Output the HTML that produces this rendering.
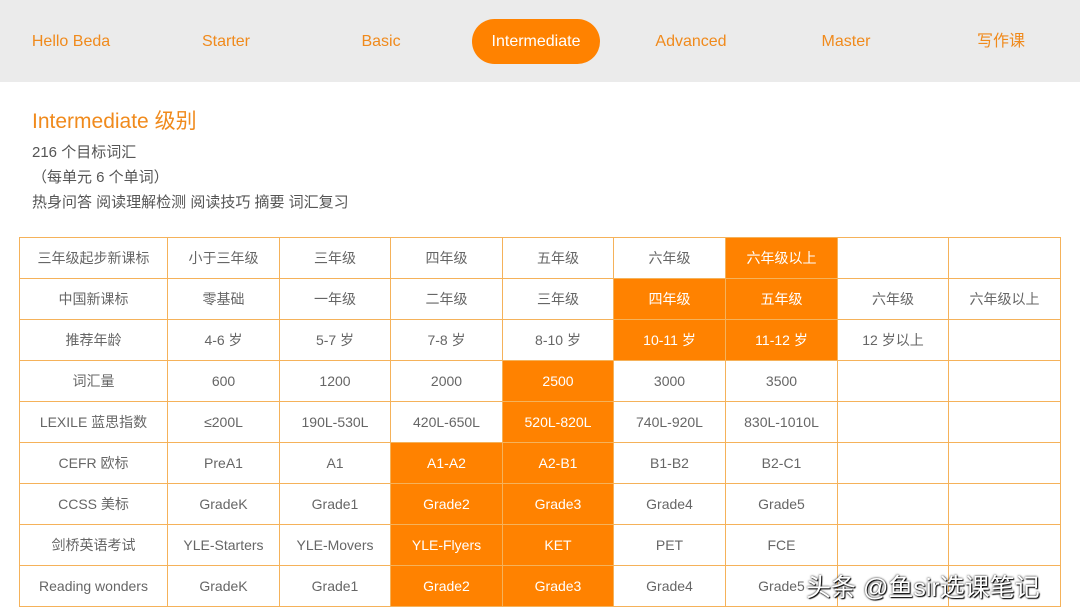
<!DOCTYPE html><html><head><meta charset="utf-8"><style>
body{margin:0;width:1080px;height:616px;background:#fff;font-family:"Liberation Sans","Noto Sans CJK SC",sans-serif;overflow:hidden;position:relative}
.nav{position:absolute;left:0;top:0;width:1080px;height:82px;background:#ebebeb}
.nav span{position:absolute;top:32px;height:20px;line-height:20px;font-size:16px;color:#f08a1c;transform:translateX(-50%);white-space:nowrap}
.pill{position:absolute;left:472px;top:19px;width:128px;height:45px;border-radius:23px;background:#ff8200}
.h{position:absolute;left:32px;top:109px;font-size:21px;color:#f08a1c;line-height:26px}
.t{position:absolute;left:32px;font-size:15px;color:#555;line-height:20px}
table{position:absolute;left:19px;top:237px;border-collapse:collapse;table-layout:fixed}
td{border:1px solid #f5b25a;height:40px;text-align:center;font-size:14px;color:#666;padding:0;white-space:nowrap}
td.o{background:#ff8200;color:#fff}
.wm{position:absolute;left:806px;top:568px;font-size:25px;color:#fff;text-shadow:0 0 2px #000,1px 1px 1px #000}
</style></head><body>
<div class="nav"><div class="pill"></div>
<span style="left:71px">Hello Beda</span><span style="left:226px">Starter</span><span style="left:381px">Basic</span><span style="left:536px;color:#fff">Intermediate</span><span style="left:691px">Advanced</span><span style="left:846px">Master</span><span style="left:1001px">写作课</span></div>
<div class="h">Intermediate 级别</div>
<div class="t" style="top:143px">216 个目标词汇</div>
<div class="t" style="top:168px">（每单元 6 个单词）</div>
<div class="t" style="top:193px">热身问答 阅读理解检测 阅读技巧 摘要 词汇复习</div>
<table>
<colgroup><col style="width:148px"><col style="width:112px"><col style="width:111px"><col style="width:112px"><col style="width:111px"><col style="width:112px"><col style="width:112px"><col style="width:111px"><col style="width:112px"></colgroup>
<tr><td>三年级起步新课标</td><td>小于三年级</td><td>三年级</td><td>四年级</td><td>五年级</td><td>六年级</td><td class="o">六年级以上</td><td></td><td></td></tr>
<tr><td>中国新课标</td><td>零基础</td><td>一年级</td><td>二年级</td><td>三年级</td><td class="o">四年级</td><td class="o">五年级</td><td>六年级</td><td>六年级以上</td></tr>
<tr><td>推荐年龄</td><td>4-6 岁</td><td>5-7 岁</td><td>7-8 岁</td><td>8-10 岁</td><td class="o">10-11 岁</td><td class="o">11-12 岁</td><td>12 岁以上</td><td></td></tr>
<tr><td>词汇量</td><td>600</td><td>1200</td><td>2000</td><td class="o">2500</td><td>3000</td><td>3500</td><td></td><td></td></tr>
<tr><td>LEXILE 蓝思指数</td><td>≤200L</td><td>190L-530L</td><td>420L-650L</td><td class="o">520L-820L</td><td>740L-920L</td><td>830L-1010L</td><td></td><td></td></tr>
<tr><td>CEFR 欧标</td><td>PreA1</td><td>A1</td><td class="o">A1-A2</td><td class="o">A2-B1</td><td>B1-B2</td><td>B2-C1</td><td></td><td></td></tr>
<tr><td>CCSS 美标</td><td>GradeK</td><td>Grade1</td><td class="o">Grade2</td><td class="o">Grade3</td><td>Grade4</td><td>Grade5</td><td></td><td></td></tr>
<tr><td>剑桥英语考试</td><td>YLE-Starters</td><td>YLE-Movers</td><td class="o">YLE-Flyers</td><td class="o">KET</td><td>PET</td><td>FCE</td><td></td><td></td></tr>
<tr><td>Reading wonders</td><td>GradeK</td><td>Grade1</td><td class="o">Grade2</td><td class="o">Grade3</td><td>Grade4</td><td>Grade5</td><td></td><td></td></tr>
</table>
<div class="wm">头条 @鱼sir选课笔记</div>
</body></html>
